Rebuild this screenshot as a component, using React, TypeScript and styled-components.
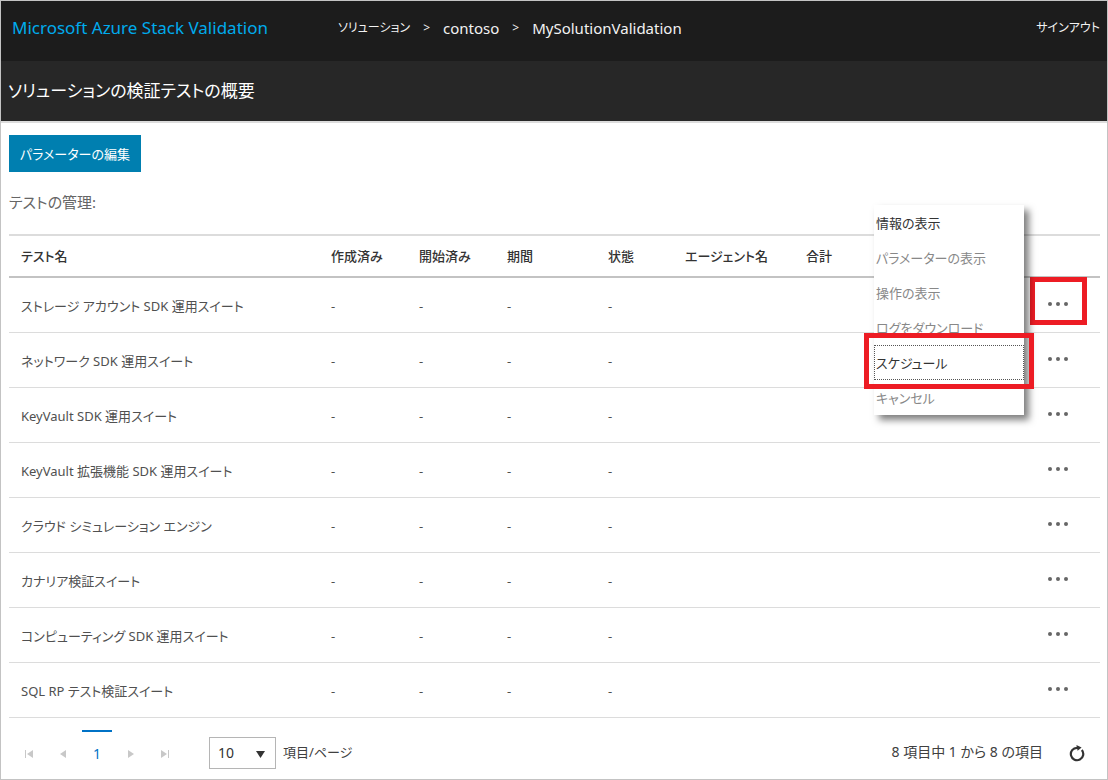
import React from "react";
import styled, { createGlobalStyle } from "styled-components";

const GlobalStyle = createGlobalStyle`
  *, *::before, *::after { box-sizing: border-box; }
  body {
    margin: 0;
    background: #fff;
    font-family: "Noto Sans", "Noto Sans CJK JP", sans-serif;
    font-feature-settings: "palt";
    font-size: 13px;
    line-height: 20px;
    color: #505050;
  }
  button, select { font: inherit; font-feature-settings: inherit; color: inherit; }
`;

const Page = styled.div`
  min-height: 100vh;
  border: 1px solid #c3c3c3;
`;

const TopBar = styled.header`
  display: flex;
  align-items: center;
  height: 60px;
  padding: 0 7px 6px 11px;
  background: #1c1c1c;
  color: #f2f2f2;
`;

const Brand = styled.a`
  flex: 0 0 326px;
  font-size: 17px;
  line-height: 24px;
  color: #00abec;
  text-decoration: none;
`;

const Crumbs = styled.nav`
  flex: 1;
  display: flex;
  align-items: center;
  gap: 13px;
  white-space: nowrap;
`;

const BarLink = styled.a<{ $latin?: boolean }>`
  font-size: ${(p) => (p.$latin ? 15 : 12)}px;
  color: inherit;
  text-decoration: none;
`;

const Separator = styled.span`
  font-size: 12px;
`;

const TitleBar = styled.div`
  display: flex;
  align-items: center;
  height: 62px;
  padding: 0 7px;
  background: #272727;
  border-bottom: 2px solid #dcdcdc;
`;

const Title = styled.h1`
  margin: 0;
  font-size: 17px;
  line-height: 28px;
  font-weight: 400;
  color: #fff;
`;

const Content = styled.main`
  padding: 12px 7px 0 8px;
`;

const PrimaryButton = styled.button`
  display: block;
  width: 132px;
  height: 37px;
  padding: 0 0 0 11px;
  border: 0;
  background: #007fb0;
  text-align: left;
  white-space: nowrap;
  && { color: #fff; }
`;

const SectionLabel = styled.h2`
  margin: 18px 0 20px;
  font-size: 15px;
  line-height: 24px;
  font-weight: 400;
  color: #666;
`;

const Table = styled.table`
  width: 100%;
  table-layout: fixed;
  border-collapse: separate;
  border-spacing: 0;
`;

const Col = styled.col<{ $width?: number }>`
  width: ${(p) => (p.$width ? `${p.$width}px` : "auto")};
`;

const HeadCell = styled.th`
  height: 44px;
  padding: 0 0 0 12px;
  border-top: 2px solid #dcdcdc;
  border-bottom: 2px solid #c3c3c3;
  text-align: left;
  font-size: 13px;
  font-weight: 500;
  color: #333;
`;

const Cell = styled.td`
  height: 55px;
  padding: 2px 0 0 12px;
  border-bottom: 1px solid #dcdcdc;
`;

const ActionCell = styled(Cell)`
  position: relative;
  padding: 0;
`;

const MoreButton = styled.button`
  display: flex;
  align-items: center;
  justify-content: center;
  width: 44px;
  height: 36px;
  margin-bottom: 2px;
  padding: 0;
  border: 0;
  background: none;
  && { color: #666; }
`;

const ActionOutline = styled.span`
  position: absolute;
  left: -6px;
  top: -1px;
  width: 57px;
  height: 48px;
  border: 5px solid #ed1c24;
  pointer-events: none;
`;

const Menu = styled.div`
  position: absolute;
  z-index: 1;
  right: 76px;
  top: -73px;
  width: 150px;
  background: #fff;
  box-shadow: 5px 5px 7px rgba(0, 0, 0, 0.5);
`;

const MenuItem = styled.button<{ $focused?: boolean }>`
  display: block;
  position: relative;
  width: 100%;
  height: 35px;
  padding: 0 1px;
  border: 1px dotted ${(p) => (p.$focused ? "#555" : "transparent")};
  background: none;
  text-align: left;
  && { color: #333; }
  &&:disabled { color: #888; }
  ${(p) =>
    p.$focused &&
    `&::after {
      content: "";
      position: absolute;
      inset: -13px -11px -10px;
      border: 5px solid #ed1c24;
      pointer-events: none;
    }`}
`;

const Pager = styled.footer`
  display: flex;
  align-items: center;
  height: 61px;
  padding-left: 5px;
`;

const PageButtons = styled.div`
  display: flex;
  align-self: stretch;
  gap: 4px;
  margin: 12px 29px 4px 0;
`;

const PageButton = styled.button<{ $current?: boolean }>`
  display: flex;
  align-items: center;
  justify-content: center;
  width: 30px;
  padding: 0;
  border: 0;
  border-top: 2px solid ${(p) => (p.$current ? "#0072c6" : "transparent")};
  background: none;
  && {
    font-size: 14px;
    color: ${(p) => (p.$current ? "#0072c6" : "#c8c8c8")};
  }
`;

const SelectBox = styled.div`
  position: relative;
  margin: 9px 7px 0 0;
`;

const SizeSelect = styled.select`
  display: block;
  appearance: none;
  width: 67px;
  height: 32px;
  padding: 0 24px 0 8px;
  border: 1px solid #b5b5b5;
  border-radius: 0;
  background: #fff;
  && { color: #333; font-size: 14px; }
`;

const SelectArrow = styled.svg`
  position: absolute;
  right: 11px;
  top: 14px;
  pointer-events: none;
`;

const SizeLabel = styled.label`
  margin-top: 6px;
  color: #404040;
`;

const Summary = styled.span`
  margin: 6px 26px 0 auto;
  font-size: 14px;
  color: #404040;
`;

const RefreshButton = styled.button`
  display: flex;
  margin: 9px 15px 0 0;
  padding: 0;
  border: 0;
  background: none;
  && { color: #333; }
`;

const Dots = () => (
  <svg width="22" height="6" viewBox="0 0 22 6" fill="currentColor" aria-hidden="true">
    <circle cx="3" cy="3" r="2" />
    <circle cx="11" cy="3" r="2" />
    <circle cx="19" cy="3" r="2" />
  </svg>
);

const Arrow = ({ flip, bar }: { flip?: boolean; bar?: boolean }) => (
  <svg width="8" height="10" viewBox="0 0 8 10" fill="currentColor" aria-hidden="true">
    <g transform={flip ? "translate(8 0) scale(-1 1)" : undefined}>
      <path d={bar ? "M0 1h1v8H0zM8 1v8L2 5z" : "M7 1v8L1 5z"} />
    </g>
  </svg>
);

const Refresh = () => (
  <svg width="16" height="18" viewBox="0 0 16 18" aria-hidden="true">
    <path
      d="M9.500 3.800 H8 A6.200 6.200 0 1 0 12.800 6"
      fill="none"
      stroke="currentColor"
      strokeWidth="2.2"
    />
    <path d="M7.400 1 L12.600 3.400 L8.600 6.800z" fill="currentColor" />
  </svg>
);

const columns: { label: string; width?: number }[] = [
  { label: "テスト名" },
  { label: "作成済み", width: 88 },
  { label: "開始済み", width: 88 },
  { label: "期間", width: 101 },
  { label: "状態", width: 77 },
  { label: "エージェント名", width: 121 },
  { label: "合計", width: 242 },
];

const tests = [
  "ストレージ アカウント SDK 運用スイート",
  "ネットワーク SDK 運用スイート",
  "KeyVault SDK 運用スイート",
  "KeyVault 拡張機能 SDK 運用スイート",
  "クラウド シミュレーション エンジン",
  "カナリア検証スイート",
  "コンピューティング SDK 運用スイート",
  "SQL RP テスト検証スイート",
];

const menuItems = [
  { label: "情報の表示" },
  { label: "パラメーターの表示", disabled: true },
  { label: "操作の表示", disabled: true },
  { label: "ログをダウンロード", disabled: true },
  { label: "スケジュール", focused: true },
  { label: "キャンセル", disabled: true },
];

export default function App() {
  return (
    <Page>
      <GlobalStyle />
      <TopBar>
        <Brand href="#">Microsoft Azure Stack Validation</Brand>
        <Crumbs>
          <BarLink href="#">ソリューション</BarLink>
          <Separator>&gt;</Separator>
          <BarLink href="#" $latin>contoso</BarLink>
          <Separator>&gt;</Separator>
          <BarLink href="#" $latin>MySolutionValidation</BarLink>
        </Crumbs>
        <BarLink href="#">サインアウト</BarLink>
      </TopBar>
      <TitleBar>
        <Title>ソリューションの検証テストの概要</Title>
      </TitleBar>
      <Content>
        <PrimaryButton>パラメーターの編集</PrimaryButton>
        <SectionLabel>テストの管理:</SectionLabel>
        <Table>
          <colgroup>
            {columns.map((c) => (
              <Col key={c.label} $width={c.width} />
            ))}
            <Col $width={64} />
          </colgroup>
          <thead>
            <tr>
              {columns.map((c) => (
                <HeadCell key={c.label} scope="col">
                  {c.label}
                </HeadCell>
              ))}
              <HeadCell as="td" />
            </tr>
          </thead>
          <tbody>
            {tests.map((name, i) => (
              <tr key={name}>
                <Cell>{name}</Cell>
                <Cell>-</Cell>
                <Cell>-</Cell>
                <Cell>-</Cell>
                <Cell>-</Cell>
                <Cell />
                <Cell />
                <ActionCell>
                  <MoreButton aria-label={name}>
                    <Dots />
                  </MoreButton>
                  {i === 0 && (
                    <>
                      <ActionOutline />
                      <Menu role="menu">
                        {menuItems.map((m) => (
                          <MenuItem
                            key={m.label}
                            role="menuitem"
                            disabled={m.disabled}
                            $focused={m.focused}
                          >
                            {m.label}
                          </MenuItem>
                        ))}
                      </Menu>
                    </>
                  )}
                </ActionCell>
              </tr>
            ))}
          </tbody>
        </Table>
        <Pager>
          <PageButtons>
            <PageButton disabled aria-label="最初">
              <Arrow bar />
            </PageButton>
            <PageButton disabled aria-label="前">
              <Arrow />
            </PageButton>
            <PageButton $current>1</PageButton>
            <PageButton disabled aria-label="次">
              <Arrow flip />
            </PageButton>
            <PageButton disabled aria-label="最後">
              <Arrow flip bar />
            </PageButton>
          </PageButtons>
          <SelectBox>
            <SizeSelect id="page-size" defaultValue="10">
              <option value="10">10</option>
              <option value="20">20</option>
              <option value="50">50</option>
            </SizeSelect>
            <SelectArrow width="9" height="7" viewBox="0 0 9 7" aria-hidden="true">
              <path d="M0 0h9L4.500 7z" fill="#333" />
            </SelectArrow>
          </SelectBox>
          <SizeLabel htmlFor="page-size">項目/ページ</SizeLabel>
          <Summary>8 項目中 1 から 8 の項目</Summary>
          <RefreshButton aria-label="更新">
            <Refresh />
          </RefreshButton>
        </Pager>
      </Content>
    </Page>
  );
}
